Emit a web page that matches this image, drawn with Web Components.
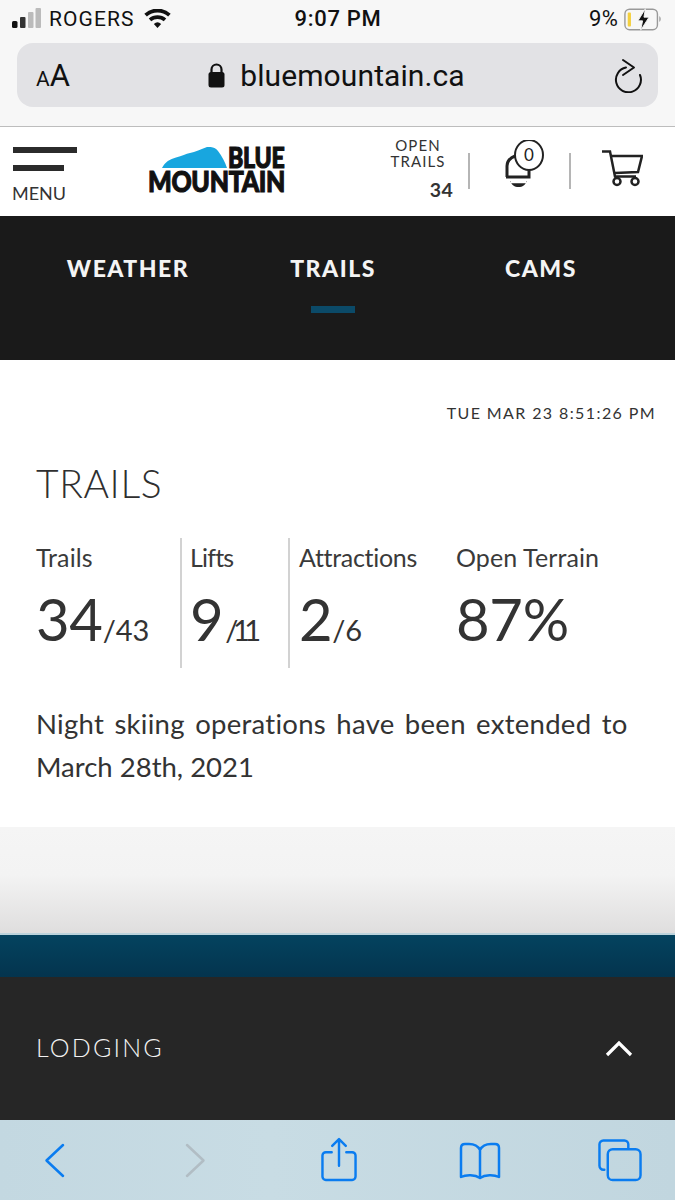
<!DOCTYPE html>
<html lang="en"><head><meta charset="utf-8"><title>Blue Mountain</title>
<style>
html,body{margin:0;padding:0;background:#fff}
body{width:675px;height:1200px;overflow:hidden;font-family:Lato,"Liberation Sans",sans-serif;display:flex;flex-direction:column}
</style></head><body>
<safari-top></safari-top>
<site-header></site-header>
<tab-nav></tab-nav>
<trails-panel></trails-panel>
<page-footer></page-footer>
<safari-toolbar></safari-toolbar>
<script>
function def(name,html){
  customElements.define(name,class extends HTMLElement{
    constructor(){super();this.attachShadow({mode:'open'}).innerHTML=html;}
  });
}
def('safari-top',`<style>
:host{display:block;height:126px;background:#f7f7f7;border-bottom:1px solid #bdbdbd;font-family:Roboto,"Liberation Sans",sans-serif;color:#111}
.status{height:37px;display:grid;grid-template-columns:1fr auto 1fr;align-items:center;padding:0 11px 0 12px}
.l,.r{display:flex;align-items:center}
.r{justify-content:flex-end;gap:5px}
.carrier{font-size:21px;margin:0 9px 0 8px;letter-spacing:1.100px}
.time{font-size:22px;font-weight:500;letter-spacing:.7px}
.pct{font-size:22px;letter-spacing:.2px}
.url{margin:6px 17px 0;height:64px;border-radius:16px;background:#e2e2e5;display:grid;grid-template-columns:1fr auto 1fr;align-items:center;padding:0 14px 0 19px}
.aa{font-size:31px;line-height:1;display:flex;align-items:baseline}
.aa small{font-size:21px}
.host{display:flex;align-items:center;gap:15px;font-size:30px;letter-spacing:.1px;margin-right:7px}
.rel{justify-self:end;display:flex}
svg{display:block}
</style>
<div class="status">
 <div class="l"><svg width="29" height="21" viewBox="0 0 29 21"><rect x="0" y="13" width="5.500" height="7" rx="1.500" fill="#111"/><rect x="8" y="9" width="5.500" height="11" rx="1" fill="#333"/><rect x="16" y="4" width="5.500" height="16" rx="1" fill="#bbb"/><rect x="23.500" y="0" width="5.500" height="20" rx="1" fill="#bbb"/></svg>
 <span class="carrier">ROGERS</span>
 <svg width="27" height="20" viewBox="0 0 29 22"><path d="M14.500 21l-4-4.600a6 6 0 0 1 8 0zM7.600 13.500l-2.700-3a14.500 14.500 0 0 1 19.200 0l-2.700 3a10.500 10.500 0 0 0-13.800 0zM2.800 8.300L0 5.200a21.500 21.500 0 0 1 29 0l-2.800 3.100a17.500 17.500 0 0 0-23.400 0z" fill="#111"/></svg></div>
 <div class="time">9:07 PM</div>
 <div class="r"><span class="pct">9%</span>
 <svg width="41" height="26" viewBox="0 0 42 28"><rect x="1" y="3.500" width="35" height="22" rx="5" fill="none" stroke="#999" stroke-width="1.500"/><rect x="4" y="7" width="3.500" height="15" rx="1" fill="#f4d03f"/><path d="M38 11c2 .5 2 5.500 0 6z" fill="#999"/><path d="M23 3l-8 13h5l-2 10 9-14h-5.500z" fill="#111" stroke="#f7f7f7" stroke-width="1"/></svg></div>
</div>
<div class="url">
 <div class="aa"><small>A</small>A</div>
 <div class="host"><svg width="17" height="25" viewBox="0 0 17 25"><path d="M3.500 10V6.500a5 5 0 0 1 10 0V10" fill="none" stroke="#111" stroke-width="2.200"/><rect x="0.500" y="9" width="16" height="15.500" rx="2.500" fill="#111"/></svg><span>bluemountain.ca</span></div>
 <div class="rel"><svg width="30" height="36" viewBox="0 0 30 36"><path d="M12 10.500A12.500 12.500 0 1 0 26 18" fill="none" stroke="#111" stroke-width="2" stroke-linecap="round"/><path d="M9 3l11 7.500L9 18" fill="none" stroke="#111" stroke-width="2" stroke-linecap="round" stroke-linejoin="round"/></svg></div>
</div>`);

def('site-logo',`<style>
:host{display:block;width:140px;font-family:Lato,"Liberation Sans",sans-serif;font-weight:900;color:#111;-webkit-text-stroke:.9px #111}
.top{display:flex;height:21px;align-items:flex-start}
svg{display:block;flex:none}
.blue{font-size:22px;line-height:21px;height:21px;transform:scale(1.050,1.280);transform-origin:0 50%;letter-spacing:-.2px}
.mt{margin-top:3px;font-size:24px;line-height:20px;height:20px;transform:scale(1.040,1.180);transform-origin:0 50%;white-space:nowrap;letter-spacing:-.3px}
</style>
<div class="top"><svg width="80" height="21" viewBox="0 0 80 21"><path d="M14 21C17 15 22 12 28 10.500 34 9 38 6.500 42 6 47 5 53 2 59 0 64-.5 68 1 70 4 74 9 77 15 79 21z" fill="#18a6df"/></svg><div class="blue">BLUE</div></div>
<div class="mt">MOUNTAIN</div>`);

def('site-header',`<style>
:host{display:flex;height:89px;background:#fff;box-sizing:border-box;align-items:stretch;color:#333}
.menu{width:136px;padding:20px 0 0 13px;box-sizing:border-box}
.b1,.b2{background:#2b2b2b;height:6px}
.b1{width:64px}.b2{width:51px;margin-top:12px}
.lbl{font-size:18px;line-height:20px;margin-top:12px;margin-left:-1px;color:#333}
site-logo{margin:20px 0 0 12px}
.open{width:92px;margin-left:auto;padding-top:10px;box-sizing:border-box;font-size:15px;line-height:16px;letter-spacing:1.100px;text-align:center;color:#333}
.open .t{width:84px}
.open b{display:block;text-align:right;font-size:19.500px;line-height:20px;margin-top:11px;padding-right:15px;letter-spacing:.3px;font-weight:700}
.sep{width:2px;height:36px;background:#b5b5b5;align-self:center;margin-top:-1px}
.bell{width:99px;display:flex;justify-content:flex-start;padding:13px 0 0 34px;box-sizing:border-box;position:relative}
.cart{padding:23px 32px 0 31px}
svg{display:block}
.c{position:absolute;left:0;right:0;top:19px;text-align:center;font-size:17px;line-height:18px;padding-left:19px;color:#222}
</style>
<div class="menu"><div class="b1"></div><div class="b2"></div><div class="lbl">MENU</div></div>
<site-logo></site-logo>
<div class="open"><div class="t">OPEN TRAILS</div><b>34</b></div>
<div class="sep"></div>
<div class="bell"><svg width="44" height="50" viewBox="0 0 44 50"><path d="M3 37V26c0-5 3-8 8-10" fill="none" stroke="#222" stroke-width="3"/><path d="M2 37h23v-7" fill="none" stroke="#222" stroke-width="3"/><path d="M6.500 41h16c-1 4-4 6-8 6s-7-2-8-6z" fill="#222"/><path d="M7 42h15" stroke="#fff" stroke-width="2.500"/><ellipse cx="25" cy="15" rx="14" ry="15" fill="#fff" stroke="#222" stroke-width="2"/></svg><span class="c">0</span></div>
<div class="sep"></div>
<div class="cart"><svg width="41" height="37" viewBox="0 0 41 37"><path d="M0 1.500h8l5 25h21" fill="none" stroke="#222" stroke-width="2.500"/><path d="M9 6h31l-4 16-23 1" fill="none" stroke="#222" stroke-width="2.500"/><circle cx="15" cy="31.500" r="3.500" fill="none" stroke="#222" stroke-width="2.500"/><circle cx="33" cy="31.500" r="3.500" fill="none" stroke="#222" stroke-width="2.500"/></svg></div>`);

def('tab-nav',`<style>
:host{display:grid;grid-template-columns:256px 154px 262px;height:144px;background:#1a1a1a;color:#f4f4f4;box-sizing:border-box;padding-top:38px;font-weight:900;font-size:23px;line-height:28px;letter-spacing:1.500px}
.i{display:flex;flex-direction:column;align-items:center}
.bar{width:44px;height:7px;background:#0b4a68;margin-top:24px}
</style>
<div class="i">WEATHER</div><div class="i">TRAILS<div class="bar"></div></div><div class="i">CAMS</div>`);

def('stat-col',`<style>
:host{display:block;box-sizing:border-box;height:130px;color:#333}
.l{font-size:25px;line-height:28px;margin-top:5px;color:#3a3a3a;white-space:nowrap;letter-spacing:var(--ls,.1px)}
.v{margin-top:17px;font-size:58px;line-height:62px;white-space:nowrap;letter-spacing:-.3px}
</style><div class="l"><slot name="label"></slot></div><div class="v"><slot></slot></div>`);

def('trails-panel',`<style>
:host{display:block;height:467px;background:#fff;box-sizing:border-box;padding:44px 19px 0 36px;color:#333}
.ts{text-align:right;font-size:16px;line-height:18px;letter-spacing:1.400px;color:#333}
h2{font-weight:300;font-size:39px;line-height:44px;margin:39px 0 0;letter-spacing:.6px;color:#2f2f2f}
.stats{display:flex;margin-top:33px;height:130px}
stat-col:nth-child(1){width:144px}
stat-col:nth-child(2){width:108px;border-left:2px solid #d2d2d2;padding-left:8px;--ls:-.8px}
stat-col:nth-child(3){width:168px;border-left:2px solid #d2d2d2;padding-left:9px;--ls:-.3px}
stat-col:nth-child(4){width:180px}
small{font-size:29px;letter-spacing:-.1px}
small.n{letter-spacing:-5.500px;margin-left:2px}
p{margin:34px 0 0;font-size:27.500px;line-height:43px;color:#333}
p::first-line{word-spacing:3px;letter-spacing:.28px}
</style>
<div class="ts">TUE MAR 23 8:51:26 PM</div>
<h2>TRAILS</h2>
<div class="stats">
<stat-col><span slot="label">Trails</span>34<small>/43</small></stat-col>
<stat-col><span slot="label">Lifts</span>9<small class="n">/11</small></stat-col>
<stat-col><span slot="label">Attractions</span>2<small>/6</small></stat-col>
<stat-col><span slot="label">Open Terrain</span>87%</stat-col>
</div>
<p>Night skiing operations have been extended to March 28th, 2021</p>`);

def('page-footer',`<style>
:host{display:block}
.g{height:106px;background:linear-gradient(#f5f5f5 0,#f3f3f3 45%,#dfdede 100%)}
.t{height:44px;box-sizing:border-box;border-top:2px solid #bcd3dc;background:linear-gradient(#04435f,#04344e)}
.d{height:143px;background:#262626;color:#f2f2f2;display:flex;justify-content:space-between;padding:56px 42px 0 36px;box-sizing:border-box;font-size:25px;font-weight:300;line-height:28px;letter-spacing:2.200px}
svg{display:block;margin-top:7px}
</style>
<div class="g"></div><div class="t"></div>
<div class="d"><span>LODGING</span><svg width="28" height="17" viewBox="0 0 28 17"><path d="M2 15L14 3l12 12" fill="none" stroke="#fff" stroke-width="3.200"/></svg></div>`);

def('safari-toolbar',`<style>
:host{display:flex;height:80px;background:linear-gradient(90deg,#c3d8e1,#c8dce4 40%,#c1d6df);box-sizing:border-box;padding:0 33px 0 44px;justify-content:space-between;align-items:flex-start}
svg{display:block;fill:none;stroke:#0a7cf0;stroke-width:2.500;stroke-linecap:round;stroke-linejoin:round}
.n{stroke:#b1bdc4}
</style>
<svg style="margin-top:23px" width="22" height="35" viewBox="0 0 22 35"><path d="M19 2L2.500 17.500 19 33"/></svg>
<svg class="n" style="margin:23px 0 0 70px" width="22" height="35" viewBox="0 0 22 35"><path d="M3 2l16.500 15.500L3 33"/></svg>
<svg style="margin:17px 0 0 66px" width="36" height="45" viewBox="0 0 37 45"><path d="M11 15H5a3.500 3.500 0 0 0-3.500 3.500V40A3.500 3.500 0 0 0 5 43.500H32A3.500 3.500 0 0 0 35.500 40V18.500A3.500 3.500 0 0 0 32 15h-6M18.500 29V2M11.500 8.500L18.500 1.500l7 7"/></svg>
<svg style="margin:22px 0 0 54px" width="42" height="38" viewBox="0 0 42 38"><path d="M21 8C19 4 15 2 10 2H6C3 2 2 3.500 2 6v29c5-2.500 14-2.500 19 1 5-3.500 14-3.500 19-1V6c0-2.500-1-4-4-4h-4C27 2 23 4 21 8zV34"/></svg>
<svg style="margin:18px 0 0 49px" width="44" height="44" viewBox="0 0 45 44"><path d="M6.500 32H5.500A4 4 0 0 1 1.500 28V6A4 4 0 0 1 5.500 2H27A4 4 0 0 1 31 6V10"/><rect x="10" y="11" width="33.500" height="31.500" rx="5"/></svg>`);
</script>
</body></html>
